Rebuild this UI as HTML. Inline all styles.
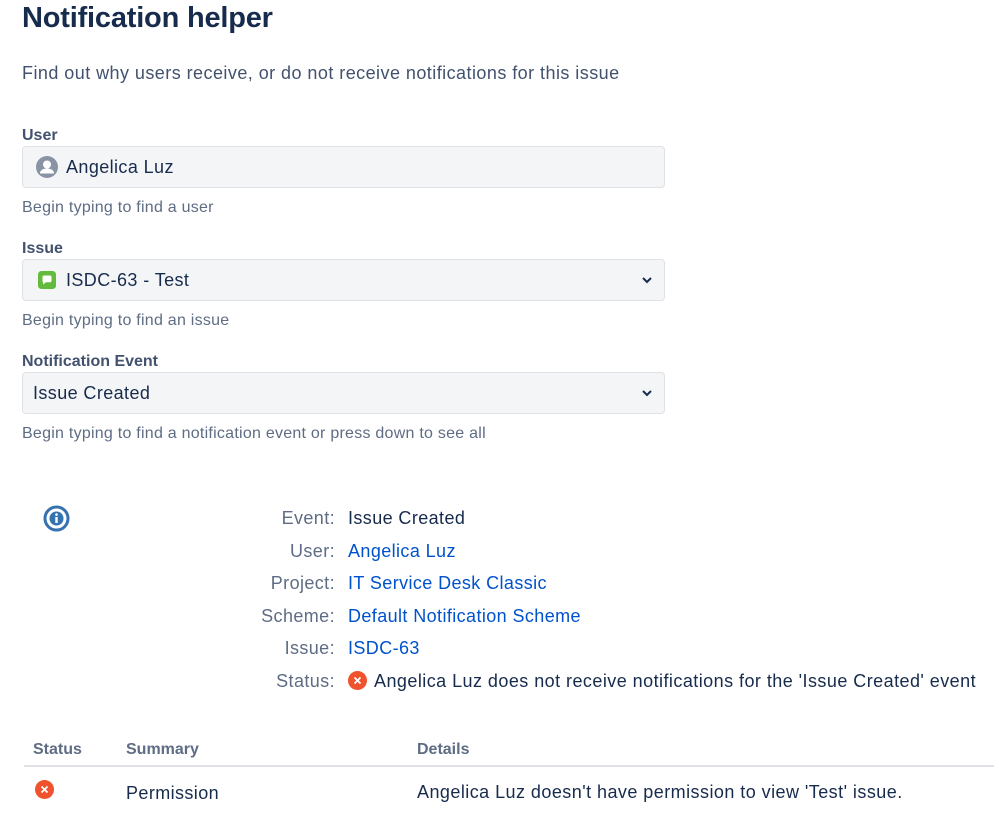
<!DOCTYPE html>
<html><head><style>
body{margin:0;background:#fff;font-family:"Liberation Sans",Arial,sans-serif;color:#172b4d;width:999px;height:837px;overflow:hidden;position:relative}
.a{position:absolute;white-space:nowrap}
h1{position:absolute;left:22px;top:0;margin:0;font-size:29px;font-weight:600;line-height:36px;color:#172b4d;letter-spacing:-0.2px}
.lbl{font-size:16px;font-weight:bold;color:#42526e}
.help{font-size:16px;color:#5e6c84;letter-spacing:0.25px}
.box{position:absolute;left:22px;width:643px;height:42px;background:#f4f5f7;border:1px solid #dfe1e6;border-radius:4px;font-size:18px;line-height:40px;box-sizing:border-box;letter-spacing:0.4px}
.k{font-size:18px;color:#5e6c84;text-align:right;width:120px;left:215px;letter-spacing:0.4px}
.v{font-size:18px;left:348px;letter-spacing:0.4px}
.lnk{color:#0052cc}
.chev{position:absolute;right:10px;top:14px}
</style></head><body>
<h1>Notification helper</h1>
<div class="a" style="left:22px;top:63px;font-size:18px;color:#42526e;letter-spacing:0.45px">Find out why users receive, or do not receive notifications for this issue</div>

<div class="a lbl" style="left:22px;top:127px">User</div>
<div class="box" style="top:146px">
<svg class="a" style="left:13px;top:9px" width="22" height="22" viewBox="0 0 22 22"><circle cx="11" cy="11" r="11" fill="#8993a4"/><circle cx="11" cy="8.5" r="4" fill="#fff"/><path d="M4 16.5c1-3 4-4 7-4s6 1 7 4v1H4z" fill="#fff"/></svg>
<span class="a" style="left:43px;top:0">Angelica Luz</span></div>
<div class="a help" style="left:22px;top:199px">Begin typing to find a user</div>

<div class="a lbl" style="left:22px;top:240px">Issue</div>
<div class="box" style="top:259px">
<svg class="a" style="left:15px;top:11px" width="18" height="18" viewBox="0 0 16 16"><rect width="16" height="16" rx="3" fill="#63ba3c"/><path d="M4 5.5a1.5 1.5 0 011.5-1.5h5A1.5 1.5 0 0112 5.5v3a1.5 1.5 0 01-1.5 1.5H7l-2.5 2v-2A1.5 1.5 0 014 8.5z" fill="#fff"/></svg>
<span class="a" style="left:43px;top:0">ISDC-63 - Test</span>
<svg class="chev" width="14" height="12" viewBox="0 0 14 12"><path d="M3 4l4 4 4-4" stroke="#172b4d" stroke-width="2" fill="none"/></svg></div>
<div class="a help" style="left:22px;top:312px">Begin typing to find an issue</div>

<div class="a lbl" style="left:22px;top:353px">Notification Event</div>
<div class="box" style="top:372px">
<span class="a" style="left:10px;top:0">Issue Created</span>
<svg class="chev" width="14" height="12" viewBox="0 0 14 12"><path d="M3 4l4 4 4-4" stroke="#172b4d" stroke-width="2" fill="none"/></svg></div>
<div class="a help" style="left:22px;top:425px">Begin typing to find a notification event or press down to see all</div>

<svg class="a" style="left:43px;top:505px" width="27" height="27" viewBox="0 0 27 27"><circle cx="13.5" cy="13.5" r="11.5" fill="none" stroke="#3572b0" stroke-width="3"/><circle cx="13.5" cy="13.5" r="7" fill="#3572b0"/><rect x="12.3" y="12" width="2.4" height="6" fill="#fff"/><circle cx="13.5" cy="9.6" r="1.3" fill="#fff"/></svg>

<div class="a k" style="top:508px">Event:</div><div class="a v" style="top:508px;color:#172b4d">Issue Created</div>
<div class="a k" style="top:541px">User:</div><div class="a v lnk" style="top:541px">Angelica Luz</div>
<div class="a k" style="top:573px">Project:</div><div class="a v lnk" style="top:573px">IT Service Desk Classic</div>
<div class="a k" style="top:606px">Scheme:</div><div class="a v lnk" style="top:606px">Default Notification Scheme</div>
<div class="a k" style="top:638px">Issue:</div><div class="a v lnk" style="top:638px">ISDC-63</div>
<div class="a k" style="top:671px">Status:</div>
<svg class="a" style="left:348px;top:671px" width="19" height="19" viewBox="0 0 19 19"><circle cx="9.5" cy="9.5" r="9.5" fill="#f0522d"/><path d="M6.5 6.5l6 6M12.5 6.5l-6 6" stroke="#fff" stroke-width="1.8"/></svg>
<div class="a" style="left:374px;top:671px;font-size:18px;letter-spacing:0.45px">Angelica Luz does not receive notifications for the 'Issue Created' event</div>

<div class="a lbl" style="left:33px;top:741px;color:#5e6c84">Status</div>
<div class="a lbl" style="left:126px;top:741px;color:#5e6c84">Summary</div>
<div class="a lbl" style="left:417px;top:741px;color:#5e6c84">Details</div>
<div class="a" style="left:24px;top:765px;width:970px;height:2px;background:#dfe1e6"></div>
<svg class="a" style="left:35px;top:780px" width="19" height="19" viewBox="0 0 19 19"><circle cx="9.5" cy="9.5" r="9.5" fill="#f0522d"/><path d="M6.5 6.5l6 6M12.5 6.5l-6 6" stroke="#fff" stroke-width="1.8"/></svg>
<div class="a" style="left:126px;top:783px;font-size:18px;letter-spacing:0.4px">Permission</div>
<div class="a" style="left:417px;top:782px;font-size:18px;letter-spacing:0.45px">Angelica Luz doesn't have permission to view 'Test' issue.</div>
</body></html>
